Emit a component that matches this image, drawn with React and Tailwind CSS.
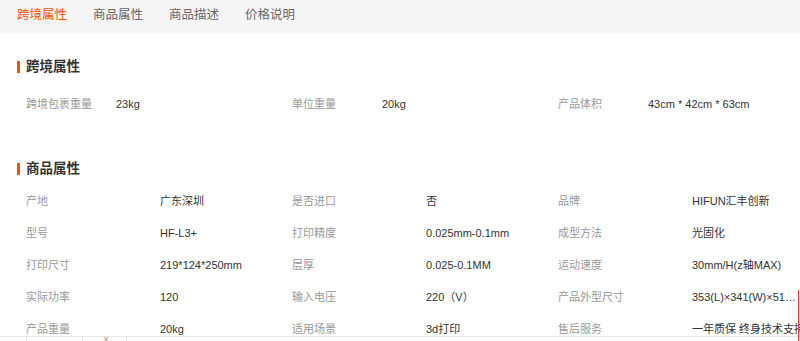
const font = { fontFamily: '"Liberation Sans", "Noto Sans CJK SC", sans-serif' }

const TABS = ['跨境属性', '商品属性', '商品描述', '价格说明']

const CROSS = [
  ['跨境包裹重量', '23kg'],
  ['单位重量', '20kg'],
  ['产品体积', '43cm * 42cm * 63cm'],
]

const PROPS = [
  ['产地', '广东深圳'],
  ['是否进口', '否'],
  ['品牌', 'HIFUN汇丰创新'],
  ['型号', 'HF-L3+'],
  ['打印精度', '0.025mm-0.1mm'],
  ['成型方法', '光固化'],
  ['打印尺寸', '219*124*250mm'],
  ['层厚', '0.025-0.1MM'],
  ['运动速度', '30mm/H(z轴MAX)'],
  ['实际功率', '120'],
  ['输入电压', '220（V）'],
  ['产品外型尺寸', '353(L)×341(W)×510(H)mm'],
  ['产品重量', '20kg'],
  ['适用场景', '3d打印'],
  ['售后服务', '一年质保 终身技术支持'],
]

function Heading({ children }) {
  return (
    <div className="flex items-center h-5 pl-[17px]">
      <span className="w-[3px] h-3 bg-[#ff5000]" />
      <span className="ml-[6px] text-[13.5px] font-bold text-[#333]">{children}</span>
    </div>
  )
}

export default function App() {
  return (
    <div className="relative w-[800px] h-[341px] overflow-hidden bg-white" style={font}>
      <div className="h-[33px] bg-[#f5f5f5] flex items-center gap-[26px] pl-[17px] pb-[2px]">
        {TABS.map((t, i) => (
          <span key={t} className={`text-[12.5px] ${i === 0 ? 'text-[#ff5000]' : 'text-[#666]'}`}>{t}</span>
        ))}
      </div>

      <div className="mt-[24px]">
        <Heading>跨境属性</Heading>
      </div>
      <div className="mt-[11px] pl-[26px] grid grid-cols-[90px_176px_90px_176px_90px_176px] h-8 items-center text-[11px] whitespace-nowrap">
        {CROSS.map(([k, v]) => (
          <div key={k} className="contents">
            <span className="text-[#999]">{k}</span>
            <span className="text-[#333]">{v}</span>
          </div>
        ))}
      </div>

      <div className="mt-[39px]">
        <Heading>商品属性</Heading>
      </div>
      <div className="mt-[6px] pl-[26px] grid grid-cols-[134px_132px_134px_132px_134px_108px] auto-rows-[32px] items-center text-[11px] whitespace-nowrap">
        {PROPS.map(([k, v], i) => (
          <div key={k} className="contents">
            <span className="text-[#999]">{k}</span>
            <span className={`text-[#333] ${i === 11 ? 'truncate' : ''}`}>{v}</span>
          </div>
        ))}
      </div>

      <div className="absolute left-0 right-0 top-[336px] h-[5px] border-t border-[#e8e8e8] bg-white flex">
        <span className="ml-[26px] w-[57px] border-x border-[#e0e0e0]" />
        <span className="ml-[20px] text-[10px] leading-[6px] text-[#999]">×</span>
        <span className="ml-[17px] flex-1 border-l border-[#e0e0e0]" />
      </div>
      <span className="absolute right-[1px] top-[290px] bottom-0 w-px bg-[#e4393c]" />
    </div>
  )
}
